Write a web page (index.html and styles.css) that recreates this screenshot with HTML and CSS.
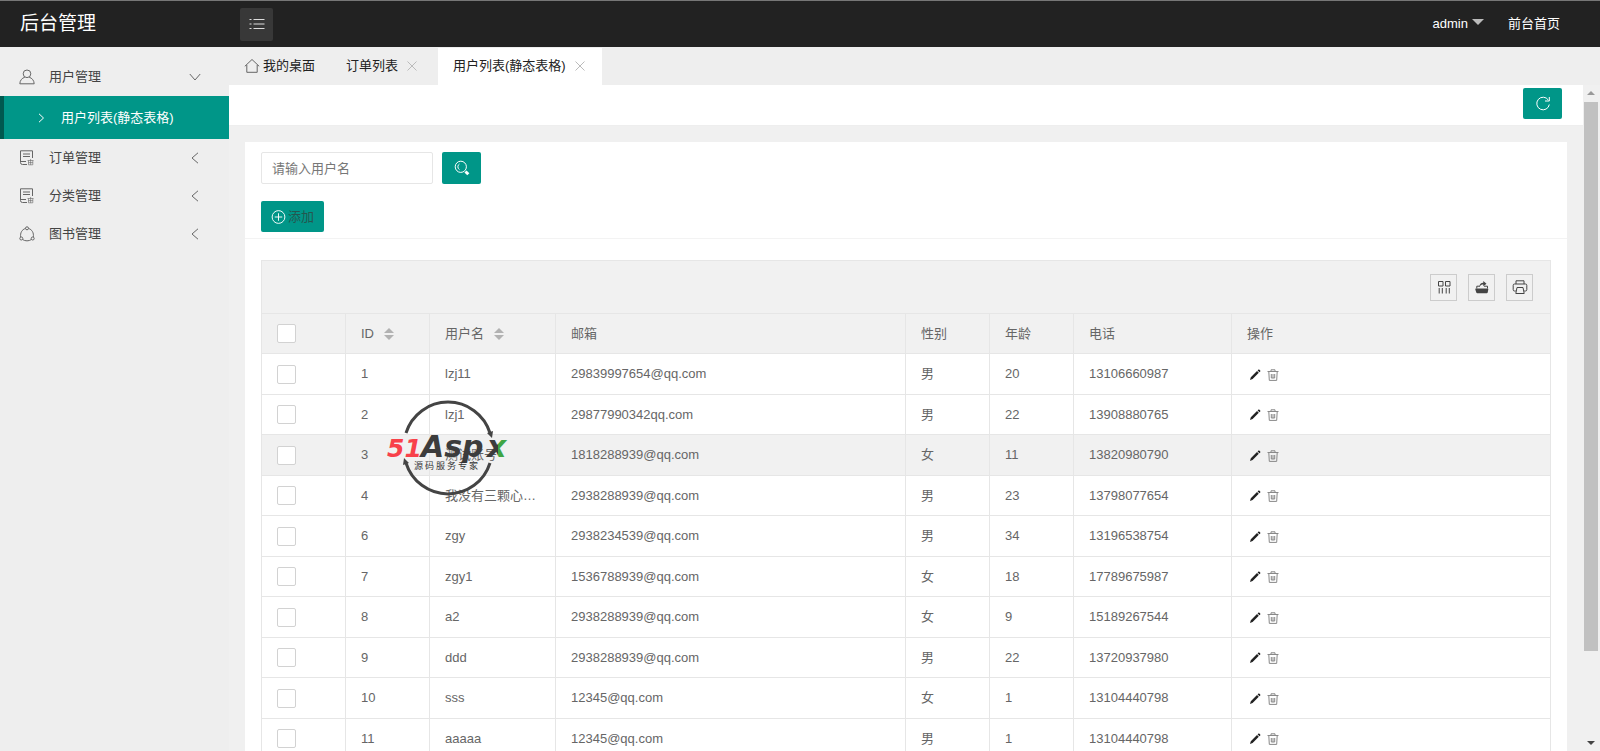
FILE: index.html
```html
<!DOCTYPE html>
<html lang="zh-CN">
  <head>
    <meta charset="UTF-8" />
    <meta name="viewport" content="width=device-width, initial-scale=1.0" />
    <title>后台管理</title>
    <link rel="stylesheet" href="styles.css">
  </head>
  <body>
    <!-- Icons -->
    <svg class="sprite" aria-hidden="true">
      <symbol id="i-user" viewBox="0 0 16 16">
        <circle cx="8" cy="4.8" r="3.8" />
        <path d="M5.8 8.2C3 9.2 1 11.200 .8 14.800H15.200C15 11.200 13 9.200 10.200 8.200" />
      </symbol>
      <symbol id="i-form" viewBox="0 0 16 16">
        <path d="M8 14.500H3.500Q1.500 14.500 1.500 12.500V.8H13.500V8M4 4H11M4 6.500H11M1.500 11.500H7" />
        <path class="thin" d="M8.500 10.500H14.500M9.500 10.500V14.800H13.800V10.500M11.600 9V14.800M9.500 12.600H13.800" />
      </symbol>
      <symbol id="i-share" viewBox="0 0 16 16">
        <circle cx="8" cy="2.300" r="1.500" />
        <circle cx="2.300" cy="12.500" r="1.500" />
        <circle cx="13.700" cy="12.500" r="1.500" />
        <path d="M6.400 2.500C3 3.500 1 7 1.700 11M9.600 2.500C13 3.500 15 7 14.300 11M3.600 13.500C6 15.300 10 15.300 12.400 13.500" />
      </symbol>
      <symbol id="i-home" viewBox="0 0 16 16">
        <path d="M.8 8.300L8 1.500L15.200 8.300M2.800 7V14.300H13.200V7" />
      </symbol>
      <symbol id="i-down" viewBox="0 0 12 12"><path d="M.8 3L6 9L11.200 3" /></symbol>
      <symbol id="i-left" viewBox="0 0 12 12"><path d="M9 .8L3 6L9 11.200" /></symbol>
      <symbol id="i-right" viewBox="0 0 12 12"><path d="M4 1.800L8.500 6L4 10.200" /></symbol>
      <symbol id="i-close" viewBox="0 0 12 12"><path d="M1.500 1.500L10.500 10.500M10.500 1.500L1.500 10.500" /></symbol>
      <symbol id="i-list" viewBox="0 0 16 16">
        <path d="M4.500 3.500H15.500M4.500 8H15.500M4.500 12.500H15.500M.5 3.500H2.500M.5 8H2.500M.5 12.500H2.500" />
      </symbol>
      <symbol id="i-refresh" viewBox="0 0 16 16">
        <path d="M13.300 4A6.300 6.300 0 1 0 14.300 8.500M14.300 1V5H10" />
      </symbol>
      <symbol id="i-search" viewBox="0 0 16 16">
        <circle cx="6.800" cy="6.800" r="5.600" />
        <path d="M5.500 4A3.200 3.200 0 0 0 5.500 9.600" />
        <path class="thick" d="M11.500 11.500L14.300 14.300" />
      </symbol>
      <symbol id="i-add" viewBox="0 0 16 16">
        <circle cx="8" cy="8" r="6.800" />
        <path d="M8 4V12M4 8H12" />
      </symbol>
      <symbol id="i-cols" viewBox="0 0 16 16">
        <path d="M2.500 2.500H7V7H2.500ZM9.500 2.500H14V7H9.500ZM3.200 9V14.500M6.300 9V14.500M10.200 9V14.500M13.300 9V14.500" />
      </symbol>
      <symbol id="i-export" viewBox="0 0 16 16">
        <path class="solid" d="M1.500 9.500H13.500Q14.500 9.500 14.300 10.500L13.700 13.500Q13.500 14.300 12.700 14.300H3.300Q2.500 14.300 2.300 13.500L1.300 10.500Z" />
        <path d="M2.800 9.500V7.200H6M13.500 9.500V7.200H10" />
        <path class="solid" d="M5.500 8C5.500 5 7 3.800 9.300 3.800V2L12.500 4.800L9.300 7.300V5.600C7.500 5.600 6.500 6.200 5.500 8Z" />
      </symbol>
      <symbol id="i-print" viewBox="0 0 16 16">
        <path d="M4 5V1.800H12V5M3.800 12H2.500Q1.200 12 1.200 10.700V6.300Q1.200 5 2.500 5H13.500Q14.800 5 14.800 6.300V10.700Q14.800 12 13.500 12H12.200M5 8.500H11L12.200 14.500H3.800Z" />
      </symbol>
      <symbol id="i-edit" viewBox="0 0 12 12">
        <path class="solid" d="M1 11L1.800 8.200L8 2L9.800 3.800L3.600 10ZM8.600 1.400L9.500 .6Q10.200 .3 10.900 1T11.300 2.400L10.500 3.200Z" />
      </symbol>
      <symbol id="i-trash" viewBox="0 0 12 12">
        <path d="M.5 2.500H11.500M4 2.500V.8H8V2.500M1.800 2.500L2.300 11.400H9.700L10.200 2.500M4.300 5V9M6 5V9M7.700 5V9M4.300 9H7.700" />
      </symbol>
    </svg>

    <!-- Top bar -->
    <header class="header">
      <h1 class="logo">后台管理</h1>
      <button class="toggle" aria-label="菜单"><svg class="icon"><use href="#i-list" /></svg></button>
      <nav class="top-nav">
        <a href="#">admin<span class="caret"></span></a>
        <a href="#">前台首页</a>
      </nav>
    </header>

    <div class="main">
      <!-- Side menu -->
      <nav class="sidebar">
        <a class="menu-item" href="#"><svg class="icon"><use href="#i-user" /></svg><span>用户管理</span><svg class="icon arrow"><use href="#i-down" /></svg></a>
        <a class="menu-item active" href="#"><svg class="icon arrow"><use href="#i-right" /></svg><span>用户列表(静态表格)</span></a>
        <a class="menu-item" href="#"><svg class="icon"><use href="#i-form" /></svg><span>订单管理</span><svg class="icon arrow"><use href="#i-left" /></svg></a>
        <a class="menu-item" href="#"><svg class="icon"><use href="#i-form" /></svg><span>分类管理</span><svg class="icon arrow"><use href="#i-left" /></svg></a>
        <a class="menu-item" href="#"><svg class="icon"><use href="#i-share" /></svg><span>图书管理</span><svg class="icon arrow"><use href="#i-left" /></svg></a>
      </nav>

      <div class="content">
        <!-- Tabs -->
        <div class="tabs">
          <a class="tab home" href="#"><svg class="icon"><use href="#i-home" /></svg>我的桌面</a>
          <a class="tab" href="#">订单列表<svg class="icon close"><use href="#i-close" /></svg></a>
          <a class="tab current" href="#">用户列表(静态表格)<svg class="icon close"><use href="#i-close" /></svg></a>
        </div>

        <div class="frame">
          <div class="page">
            <div class="crumb">
              <button class="btn" aria-label="刷新"><svg class="icon"><use href="#i-refresh" /></svg></button>
            </div>

            <div class="card">
              <form class="search">
                <input type="text" class="search-input" aria-label="用户名" placeholder="请输入用户名" />
                <button type="button" class="btn" aria-label="搜索"><svg class="icon"><use href="#i-search" /></svg></button>
              </form>
              <div class="actions">
                <button class="btn btn-add"><svg class="icon"><use href="#i-add" /></svg>添加</button>
              </div>

              <div class="table-view">
                <div class="toolbar">
                  <button class="tool" aria-label="筛选列"><svg class="icon"><use href="#i-cols" /></svg></button>
                  <button class="tool" aria-label="导出"><svg class="icon"><use href="#i-export" /></svg></button>
                  <button class="tool" aria-label="打印"><svg class="icon"><use href="#i-print" /></svg></button>
                </div>
                <table>
                  <colgroup>
                    <col class="w-s" /><col class="w-s" /><col class="w-m" /><col class="w-xl" />
                    <col class="w-s" /><col class="w-s" /><col class="w-l" /><col />
                  </colgroup>
                  <thead>
                    <tr>
                      <th><input type="checkbox" aria-label="全选" /></th>
                      <th>ID<span class="sort"></span></th>
                      <th>用户名<span class="sort"></span></th>
                      <th>邮箱</th>
                      <th>性别</th>
                      <th>年龄</th>
                      <th>电话</th>
                      <th>操作</th>
                    </tr>
                  </thead>
                  <tbody id="rows"></tbody>
                </table>
              </div>
            </div>
          </div>

          <div class="scrollbar">
            <span class="scroll-up"></span>
            <span class="thumb"></span>
            <span class="scroll-down"></span>
          </div>
        </div>
      </div>
    </div>

    <!-- Watermark -->
    <svg class="watermark" viewBox="0 0 126 92" aria-hidden="true">
      <defs>
        <linearGradient id="x-fill">
          <stop offset="0.55" stop-color="#3c3c3c" />
          <stop offset="0.55" stop-color="#3fa545" />
        </linearGradient>
      </defs>
      <path class="ring" d="M19 31A44 44 0 0 1 103 31M103 61A44 44 0 0 1 19 61" />
      <path class="head" d="M105 36L100 31L106 29ZM17 56L22 61L16 63Z" />
      <text class="num" x="0" y="55">51</text>
      <text class="word" x="34" y="55">Asp</text>
      <text class="word x" x="100" y="55">x</text>
      <text class="slogan" x="27" y="67">源 码 服 务 专 家</text>
    </svg>

    <script>
      const users = [
        [1, "lzj11", "29839997654@qq.com", "男", 20, "13106660987"],
        [2, "lzj1", "29877990342qq.com", "男", 22, "13908880765"],
        [3, "测试账号", "1818288939@qq.com", "女", 11, "13820980790"],
        [4, "我没有三颗心…", "2938288939@qq.com", "男", 23, "13798077654"],
        [6, "zgy", "2938234539@qq.com", "男", 34, "13196538754"],
        [7, "zgy1", "1536788939@qq.com", "女", 18, "17789675987"],
        [8, "a2", "2938288939@qq.com", "女", 9, "15189267544"],
        [9, "ddd", "2938288939@qq.com", "男", 22, "13720937980"],
        [10, "sss", "12345@qq.com", "女", 1, "13104440798"],
        [11, "aaaaa", "12345@qq.com", "男", 1, "13104440798"],
      ];

      const rowsEl = document.getElementById("rows");

      users.forEach((user) => {
        const row = document.createElement("tr");
        if (user[0] === 3) {
          row.className = "hover";
        }
        row.innerHTML = `
          <td><input type="checkbox" aria-label="选择 ${user[0]}" /></td>
          ${user.map((value) => `<td>${value}</td>`).join("")}
          <td>
            <a class="op edit" href="#" aria-label="编辑"><svg class="icon"><use href="#i-edit" /></svg></a>
            <a class="op" href="#" aria-label="删除"><svg class="icon"><use href="#i-trash" /></svg></a>
          </td>`;
        rowsEl.appendChild(row);
      });
    </script>
  </body>
</html>
```
FILE: styles.css
```css
* {
  box-sizing: border-box;
}

body {
  margin: 0;
  height: 100vh;
  display: flex;
  flex-direction: column;
  overflow: hidden;
  font-family: "Liberation Sans", "Noto Sans CJK SC", sans-serif;
  font-size: 13px;
  line-height: 20px;
  color: #333;
  background: #eee;
}

a {
  color: inherit;
  text-decoration: none;
}

button,
input {
  font: inherit;
  margin: 0;
}

button {
  padding: 0;
  cursor: pointer;
}

.sprite {
  display: none;
}

.icon {
  width: 16px;
  height: 16px;
  flex: none;
  fill: none;
  stroke: currentColor;
}

.solid {
  fill: currentColor;
  stroke: none;
}

.thick {
  stroke-width: 3px;
}

.thin {
  opacity: 0.6;
}

/* top bar */
.header {
  flex: none;
  height: 47px;
  display: flex;
  align-items: center;
  background: #222;
  border-top: 1px solid #777;
  color: #fff;
}

.logo {
  width: 240px;
  margin: 0;
  padding-left: 20px;
  font-size: 19px;
  font-weight: normal;
}

.toggle {
  width: 33px;
  height: 33px;
  display: flex;
  align-items: center;
  justify-content: center;
  background: #383838;
  color: #ddd;
  border: none;
  border-radius: 2px;
}

.top-nav {
  margin-left: auto;
  padding-right: 40px;
  display: flex;
  gap: 24px;
}

.top-nav a {
  display: flex;
}

.caret {
  margin: 5px 0 0 4px;
  height: 6px;
  border: 6px solid transparent;
  border-top-color: #bbb;
  border-bottom: none;
}

.main {
  flex: 1;
  min-height: 0;
  display: flex;
}

/* side menu */
.sidebar {
  flex: none;
  width: 229px;
  padding-top: 11px;
}

.menu-item {
  height: 38px;
  padding: 0 28px 0 19px;
  display: flex;
  align-items: center;
  gap: 14px;
  color: #444;
}

.menu-item .icon {
  color: #666;
}

.menu-item .arrow {
  width: 12px;
  height: 12px;
  margin-left: auto;
}

.menu-item.active {
  height: 43px;
  padding-left: 31px;
  background: #009688;
  border-left: 4px solid #00594f;
  color: #fff;
}

.menu-item.active .arrow {
  margin-left: 0;
  color: #fff;
}

.content {
  flex: 1;
  min-width: 0;
  display: flex;
  flex-direction: column;
}

/* tabs */
.tabs {
  flex: none;
  height: 38px;
  padding-top: 1px;
  display: flex;
  gap: 4px;
  color: #222;
}

.tab {
  padding: 0 16px 2px 15px;
  display: flex;
  align-items: center;
}

.tab.home {
  gap: 3px;
  padding-right: 12px;
}

.tab .close {
  width: 12px;
  height: 12px;
  margin-left: 8px;
  color: #bbb;
}

.tab.current {
  background: #fff;
}

.home .icon {
  color: #666;
}

/* page */
.frame {
  flex: 1;
  min-height: 0;
  display: flex;
  background: #f0f0f0;
}

.page {
  flex: 1;
  min-width: 0;
  overflow: hidden;
}

.crumb {
  height: 41px;
  padding: 3px 21px 0 0;
  display: flex;
  justify-content: flex-end;
  align-items: flex-start;
  background: #fff;
  border-bottom: 1px solid #eee;
}

.btn {
  width: 39px;
  height: 31px;
  display: flex;
  align-items: center;
  justify-content: center;
  background: #009688;
  color: #fff;
  border: none;
  border-radius: 2px;
}

.card {
  margin: 16px 16px 0;
  background: #fff;
}

.search {
  padding: 10px 16px 0;
  display: flex;
  gap: 9px;
}

.search-input {
  width: 172px;
  height: 32px;
  padding: 0 10px;
  border: 1px solid #e6e6e6;
  border-radius: 2px;
  background: #fff;
}

.search .btn {
  height: 32px;
}

.search-input::placeholder {
  color: #777;
}

.actions {
  padding: 17px 16px 6px;
  border-bottom: 1px solid #f3f3f3;
}

.btn-add {
  width: 63px;
  gap: 2px;
  color: #24564f;
}

.btn-add .icon {
  width: 15px;
  color: #fff;
}

/* table */
.table-view {
  margin: 21px 16px 0;
  border: 1px solid #e6e6e6;
  border-bottom: none;
}

.toolbar {
  height: 53px;
  padding-right: 17px;
  display: flex;
  align-items: center;
  justify-content: flex-end;
  gap: 11px;
  background: #f1f1f1;
  border-bottom: 1px solid #e6e6e6;
}

.tool {
  width: 27px;
  height: 27px;
  display: flex;
  align-items: center;
  justify-content: center;
  background: none;
  border: 1px solid #ccc;
  color: #444;
}

table {
  width: 100%;
  table-layout: fixed;
  border-collapse: separate;
  border-spacing: 0;
  color: #666;
}

.w-s {
  width: 84px;
}

.w-m {
  width: 126px;
}

.w-l {
  width: 158px;
}

.w-xl {
  width: 350px;
}

th,
td {
  height: 41px;
  padding: 0 15px;
  border-right: 1px solid #e6e6e6;
  border-bottom: 1px solid #e6e6e6;
  font-weight: normal;
  text-align: left;
  white-space: nowrap;
}

th:last-child,
td:last-child {
  border-right: none;
}

th,
tbody tr:nth-child(even) td {
  height: 40px;
}

thead,
.hover {
  background: #f1f1f1;
}

input[type="checkbox"] {
  display: block;
  appearance: none;
  width: 19px;
  height: 19px;
  background: #fff;
  border: 1px solid #d2d2d2;
  border-radius: 2px;
}

.sort {
  display: inline-flex;
  flex-direction: column;
  gap: 2px;
  margin-left: 10px;
  vertical-align: middle;
}

.sort::before,
.sort::after {
  content: "";
  border: 5px solid transparent;
}

.sort::before {
  border-top: none;
  border-bottom-color: #b2b2b2;
}

.sort::after {
  border-bottom: none;
  border-top-color: #b2b2b2;
}

.op {
  display: inline-block;
  vertical-align: middle;
  margin-left: 2px;
  color: #888;
}

.op .icon {
  display: block;
  width: 12px;
  height: 12px;
}

.op.edit {
  color: #222;
}

/* scrollbar */
.scrollbar {
  flex: none;
  width: 17px;
  padding: 6px 2px 6px 1px;
  display: flex;
  flex-direction: column;
  align-items: center;
}

.scroll-up {
  border: 4px solid transparent;
  border-top: none;
  border-bottom-color: #999;
}

.thumb {
  width: 14px;
  height: 84%;
  margin-top: 7px;
  background: #c1c1c1;
}

.scroll-down {
  margin-top: auto;
  border: 4px solid transparent;
  border-bottom: none;
  border-top-color: #444;
}

/* watermark lies over the table */
.watermark {
  position: absolute;
  left: 387px;
  top: 402px;
  width: 126px;
  height: 92px;
  overflow: visible;
  pointer-events: none;
}

.ring {
  fill: none;
  stroke: #444;
  stroke-width: 3px;
}

.head {
  fill: #444;
}

.watermark text {
  font-family: "DejaVu Sans", sans-serif;
  font-weight: bold;
  font-style: italic;
}

.watermark .num {
  font-size: 25px;
  fill: #f8414a;
}

.watermark .word {
  font-size: 30px;
  fill: #3c3c3c;
}

.watermark .word.x {
  fill: url(#x-fill);
}

.watermark .slogan {
  font-family: "Noto Sans CJK SC", sans-serif;
  font-size: 9px;
  font-style: normal;
  font-weight: normal;
  fill: #333;
}
```
